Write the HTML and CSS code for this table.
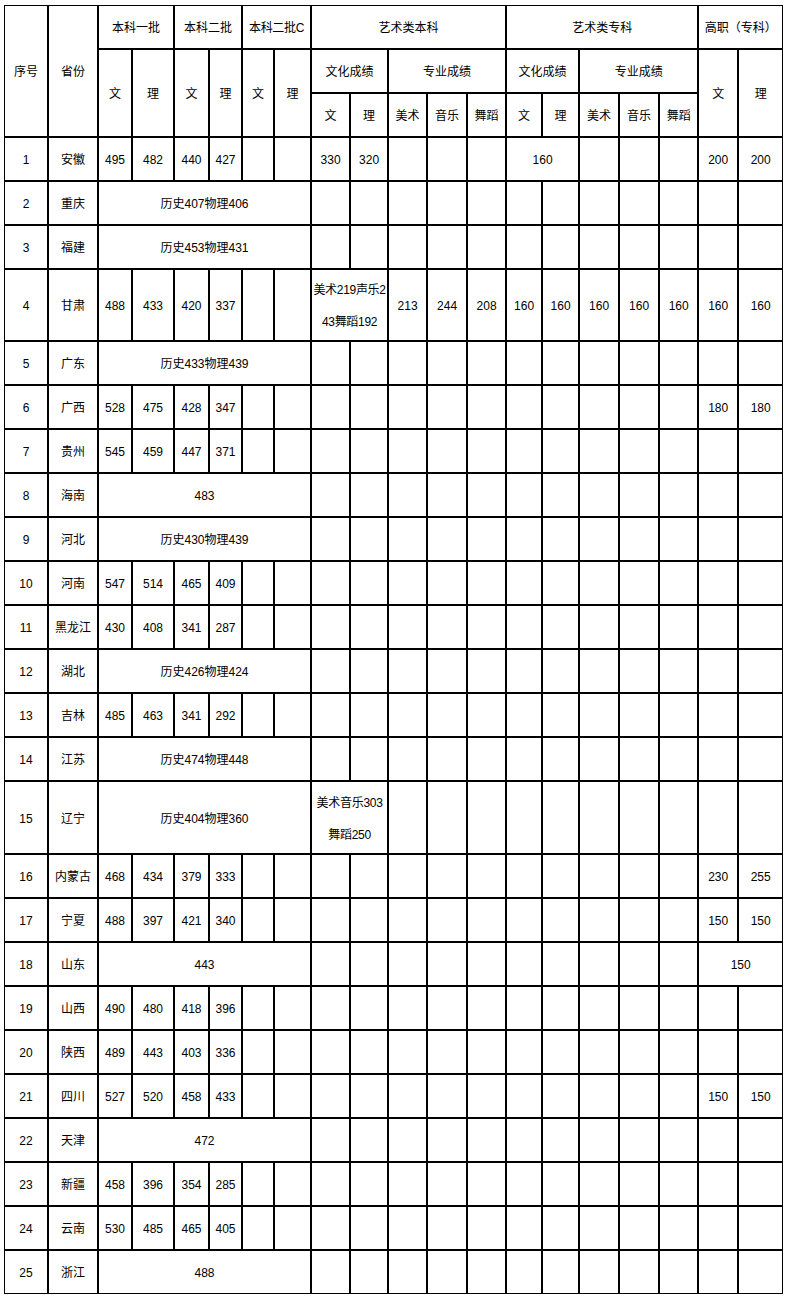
FILE: index.html
```html
<!DOCTYPE html>
<html lang="zh-CN">
<head>
<meta charset="utf-8">
<title>分数线</title>
<link rel="stylesheet" href="styles.css">
</head>
<body>
<div class="page">
<table class="score">
<colgroup>
<col class="c44"><col class="c50"><col class="c34"><col class="c42"><col class="c35"><col class="c33"><col class="c32"><col class="c37"><col class="c39"><col class="c38"><col class="c39"><col class="c40"><col class="c39"><col class="c36"><col class="c37"><col class="c40"><col class="c40"><col class="c39"><col class="c40"><col class="c45">
</colgroup>
<tr class="r"><td rowspan="3">序号</td><td rowspan="3">省份</td><td colspan="2">本科一批</td><td colspan="2">本科二批</td><td colspan="2" class="tight">本科二批C</td><td colspan="5">艺术类本科</td><td colspan="5">艺术类专科</td><td colspan="2">高职（专科）</td></tr>
<tr class="r"><td rowspan="2">文</td><td rowspan="2">理</td><td rowspan="2">文</td><td rowspan="2">理</td><td rowspan="2">文</td><td rowspan="2">理</td><td colspan="2">文化成绩</td><td colspan="3">专业成绩</td><td colspan="2">文化成绩</td><td colspan="3">专业成绩</td><td rowspan="2">文</td><td rowspan="2">理</td></tr>
<tr class="r"><td>文</td><td>理</td><td>美术</td><td>音乐</td><td>舞蹈</td><td>文</td><td>理</td><td>美术</td><td>音乐</td><td>舞蹈</td></tr>
<tr class="r"><td>1</td><td>安徽</td><td>495</td><td>482</td><td>440</td><td>427</td><td></td><td></td><td>330</td><td>320</td><td></td><td></td><td></td><td colspan="2">160</td><td></td><td></td><td></td><td>200</td><td>200</td></tr>
<tr class="r"><td>2</td><td>重庆</td><td colspan="6">历史407物理406</td><td></td><td></td><td></td><td></td><td></td><td></td><td></td><td></td><td></td><td></td><td></td><td></td></tr>
<tr class="r"><td>3</td><td>福建</td><td colspan="6">历史453物理431</td><td></td><td></td><td></td><td></td><td></td><td></td><td></td><td></td><td></td><td></td><td></td><td></td></tr>
<tr class="t72"><td>4</td><td>甘肃</td><td>488</td><td>433</td><td>420</td><td>337</td><td></td><td></td><td colspan="2" class="multi">美术219声乐2<br>43舞蹈192</td><td>213</td><td>244</td><td>208</td><td>160</td><td>160</td><td>160</td><td>160</td><td>160</td><td>160</td><td>160</td></tr>
<tr class="r"><td>5</td><td>广东</td><td colspan="6">历史433物理439</td><td></td><td></td><td></td><td></td><td></td><td></td><td></td><td></td><td></td><td></td><td></td><td></td></tr>
<tr class="r"><td>6</td><td>广西</td><td>528</td><td>475</td><td>428</td><td>347</td><td></td><td></td><td></td><td></td><td></td><td></td><td></td><td></td><td></td><td></td><td></td><td></td><td>180</td><td>180</td></tr>
<tr class="r"><td>7</td><td>贵州</td><td>545</td><td>459</td><td>447</td><td>371</td><td></td><td></td><td></td><td></td><td></td><td></td><td></td><td></td><td></td><td></td><td></td><td></td><td></td><td></td></tr>
<tr class="r"><td>8</td><td>海南</td><td colspan="6">483</td><td></td><td></td><td></td><td></td><td></td><td></td><td></td><td></td><td></td><td></td><td></td><td></td></tr>
<tr class="r"><td>9</td><td>河北</td><td colspan="6">历史430物理439</td><td></td><td></td><td></td><td></td><td></td><td></td><td></td><td></td><td></td><td></td><td></td><td></td></tr>
<tr class="r"><td>10</td><td>河南</td><td>547</td><td>514</td><td>465</td><td>409</td><td></td><td></td><td></td><td></td><td></td><td></td><td></td><td></td><td></td><td></td><td></td><td></td><td></td><td></td></tr>
<tr class="r"><td>11</td><td>黑龙江</td><td>430</td><td>408</td><td>341</td><td>287</td><td></td><td></td><td></td><td></td><td></td><td></td><td></td><td></td><td></td><td></td><td></td><td></td><td></td><td></td></tr>
<tr class="r"><td>12</td><td>湖北</td><td colspan="6">历史426物理424</td><td></td><td></td><td></td><td></td><td></td><td></td><td></td><td></td><td></td><td></td><td></td><td></td></tr>
<tr class="r"><td>13</td><td>吉林</td><td>485</td><td>463</td><td>341</td><td>292</td><td></td><td></td><td></td><td></td><td></td><td></td><td></td><td></td><td></td><td></td><td></td><td></td><td></td><td></td></tr>
<tr class="r"><td>14</td><td>江苏</td><td colspan="6">历史474物理448</td><td></td><td></td><td></td><td></td><td></td><td></td><td></td><td></td><td></td><td></td><td></td><td></td></tr>
<tr class="t73"><td>15</td><td>辽宁</td><td colspan="6">历史404物理360</td><td colspan="2" class="multi">美术音乐303<br>舞蹈250</td><td></td><td></td><td></td><td></td><td></td><td></td><td></td><td></td><td></td><td></td></tr>
<tr class="r"><td>16</td><td>内蒙古</td><td>468</td><td>434</td><td>379</td><td>333</td><td></td><td></td><td></td><td></td><td></td><td></td><td></td><td></td><td></td><td></td><td></td><td></td><td>230</td><td>255</td></tr>
<tr class="r"><td>17</td><td>宁夏</td><td>488</td><td>397</td><td>421</td><td>340</td><td></td><td></td><td></td><td></td><td></td><td></td><td></td><td></td><td></td><td></td><td></td><td></td><td>150</td><td>150</td></tr>
<tr class="r"><td>18</td><td>山东</td><td colspan="6">443</td><td></td><td></td><td></td><td></td><td></td><td></td><td></td><td></td><td></td><td></td><td colspan="2">150</td></tr>
<tr class="r"><td>19</td><td>山西</td><td>490</td><td>480</td><td>418</td><td>396</td><td></td><td></td><td></td><td></td><td></td><td></td><td></td><td></td><td></td><td></td><td></td><td></td><td></td><td></td></tr>
<tr class="r"><td>20</td><td>陕西</td><td>489</td><td>443</td><td>403</td><td>336</td><td></td><td></td><td></td><td></td><td></td><td></td><td></td><td></td><td></td><td></td><td></td><td></td><td></td><td></td></tr>
<tr class="r"><td>21</td><td>四川</td><td>527</td><td>520</td><td>458</td><td>433</td><td></td><td></td><td></td><td></td><td></td><td></td><td></td><td></td><td></td><td></td><td></td><td></td><td>150</td><td>150</td></tr>
<tr class="r"><td>22</td><td>天津</td><td colspan="6">472</td><td></td><td></td><td></td><td></td><td></td><td></td><td></td><td></td><td></td><td></td><td></td><td></td></tr>
<tr class="r"><td>23</td><td>新疆</td><td>458</td><td>396</td><td>354</td><td>285</td><td></td><td></td><td></td><td></td><td></td><td></td><td></td><td></td><td></td><td></td><td></td><td></td><td></td><td></td></tr>
<tr class="r"><td>24</td><td>云南</td><td>530</td><td>485</td><td>465</td><td>405</td><td></td><td></td><td></td><td></td><td></td><td></td><td></td><td></td><td></td><td></td><td></td><td></td><td></td><td></td></tr>
<tr class="r"><td>25</td><td>浙江</td><td colspan="6">488</td><td></td><td></td><td></td><td></td><td></td><td></td><td></td><td></td><td></td><td></td><td></td><td></td></tr>
</table>
</div>
</body>
</html>
```

FILE: styles.css
```css
html, body {
  margin: 0;
  padding: 0;
  background: #fff;
}

.page {
  padding: 5px 0 0 4px;
}

.score {
  width: 779px;
  table-layout: fixed;
  border-collapse: separate;
  border-spacing: 0;
  font-family: "Liberation Sans", "Noto Sans CJK SC", sans-serif;
  font-size: 12px;
  color: #000;
}

.score td {
  box-sizing: border-box;
  border: 1px solid #000;
  padding: 2px 0 0 0;
  text-align: center;
  vertical-align: middle;
  line-height: 20px;
  white-space: nowrap;
  overflow: hidden;
}

.score tr.r td { height: 44px; }
.score tr.t72 td { height: 72px; }
.score tr.t73 td { height: 73px; }

.score td.multi {
  line-height: 32px;
  letter-spacing: -0.3px;
}

.score td.tight {
  letter-spacing: -0.3px;
}

.c32 { width: 32px; }
.c33 { width: 33px; }
.c34 { width: 34px; }
.c35 { width: 35px; }
.c36 { width: 36px; }
.c37 { width: 37px; }
.c38 { width: 38px; }
.c39 { width: 39px; }
.c40 { width: 40px; }
.c42 { width: 42px; }
.c44 { width: 44px; }
.c45 { width: 45px; }
.c50 { width: 50px; }
```
